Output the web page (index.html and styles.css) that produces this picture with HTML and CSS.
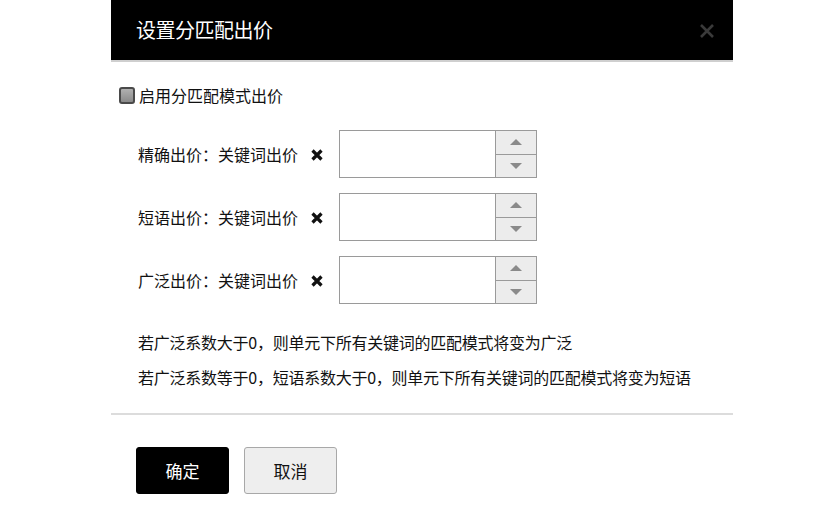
FILE: index.html
```html
<!DOCTYPE html>
<html lang="zh-CN">
<head>
<meta charset="utf-8">
<title>设置分匹配出价</title>
<link rel="stylesheet" href="styles.css">
</head>
<body>
<div class="dialog">
  <div class="dialog-header">
    <span class="dialog-title">设置分匹配出价</span>
    <span class="dialog-close" aria-label="关闭">
      <svg width="16" height="16" viewBox="0 0 16 16"><path d="M2 2 L14 14 M14 2 L2 14" stroke="#3a3a3a" stroke-width="2.6" fill="none"/></svg>
    </span>
  </div>
  <div class="dialog-body">
    <label class="enable-row"><span class="checkbox"></span>启用分匹配模式出价</label>
    <div class="rows">
      <div class="row">
        <span class="row-label">精确出价：关键词出价</span>
        <span class="times"><svg width="12" height="12" viewBox="0 0 12 12"><path d="M1.5 1.5 L10.5 10.5 M10.5 1.5 L1.5 10.5" stroke="#111" stroke-width="3.2" fill="none"/></svg></span>
        <div class="spin">
          <div class="spin-field"></div>
          <div class="spin-btns">
            <div class="spin-btn"><span class="tri-up"></span></div>
            <div class="spin-btn"><span class="tri-down"></span></div>
          </div>
        </div>
      </div>
      <div class="row">
        <span class="row-label">短语出价：关键词出价</span>
        <span class="times"><svg width="12" height="12" viewBox="0 0 12 12"><path d="M1.5 1.5 L10.5 10.5 M10.5 1.5 L1.5 10.5" stroke="#111" stroke-width="3.2" fill="none"/></svg></span>
        <div class="spin">
          <div class="spin-field"></div>
          <div class="spin-btns">
            <div class="spin-btn"><span class="tri-up"></span></div>
            <div class="spin-btn"><span class="tri-down"></span></div>
          </div>
        </div>
      </div>
      <div class="row">
        <span class="row-label">广泛出价：关键词出价</span>
        <span class="times"><svg width="12" height="12" viewBox="0 0 12 12"><path d="M1.5 1.5 L10.5 10.5 M10.5 1.5 L1.5 10.5" stroke="#111" stroke-width="3.2" fill="none"/></svg></span>
        <div class="spin">
          <div class="spin-field"></div>
          <div class="spin-btns">
            <div class="spin-btn"><span class="tri-up"></span></div>
            <div class="spin-btn"><span class="tri-down"></span></div>
          </div>
        </div>
      </div>
    </div>
    <div class="notes">
      <p>若广泛系数大于0，则单元下所有关键词的匹配模式将变为广泛</p>
      <p>若广泛系数等于0，短语系数大于0，则单元下所有关键词的匹配模式将变为短语</p>
    </div>
  </div>
  <div class="divider"></div>
  <div class="dialog-footer">
    <button class="btn btn-primary">确定</button>
    <button class="btn btn-default">取消</button>
  </div>
</div>
</body>
</html>
```

FILE: styles.css
```css
html, body {
  margin: 0;
  padding: 0;
  background: #fff;
}
body {
  font-family: "Noto Sans CJK SC", "Noto Sans", sans-serif;
  color: #111;
  font-size: 16px;
}
.dialog {
  width: 622px;
  margin-left: 111px;
  display: flex;
  flex-direction: column;
}
.dialog-header {
  height: 60px;
  background: #000;
  border-bottom: 2px solid #cfcfcf;
  display: flex;
  align-items: center;
  justify-content: space-between;
  padding: 0 18px 0 25px;
}
.dialog-title {
  color: #fff;
  font-size: 20px;
  line-height: 24px;
  letter-spacing: -0.5px;
}
.dialog-close {
  display: flex;
  margin-top: 2px;
}
.dialog-body {
  padding-left: 8px;
  display: flex;
  flex-direction: column;
}
.enable-row {
  margin-top: 23px;
  height: 20px;
  display: flex;
  align-items: center;
  line-height: 20px;
  font-size: 16px;
}
.checkbox {
  width: 12px;
  height: 13px;
  border: 2px solid #4a4a4a;
  border-radius: 3px;
  background: linear-gradient(#b0b0b0, #8a8a8a);
  margin-right: 4px;
}
.rows {
  margin-top: 25px;
  display: flex;
  flex-direction: column;
  gap: 15px;
}
.row {
  display: flex;
  align-items: center;
  height: 48px;
  padding-left: 19px;
}
.row-label {
  width: 173px;
  line-height: 20px;
  white-space: nowrap;
}
.times {
  display: flex;
  width: 28px;
  margin-top: 2px;
}
.spin {
  width: 198px;
  height: 48px;
  box-sizing: border-box;
  border: 1px solid #9a9a9a;
  display: flex;
  background: #fff;
}
.spin-field {
  flex: 1;
}
.spin-btns {
  width: 40px;
  border-left: 1px solid #9a9a9a;
  display: flex;
  flex-direction: column;
}
.spin-btn {
  flex: 1;
  background: #ececec;
  display: flex;
  align-items: center;
  justify-content: center;
}
.spin-btn + .spin-btn {
  border-top: 1px solid #9a9a9a;
}
.tri-up {
  width: 0;
  height: 0;
  border-left: 6px solid transparent;
  border-right: 6px solid transparent;
  border-bottom: 6px solid #8a8a8a;
}
.tri-down {
  width: 0;
  height: 0;
  border-left: 6px solid transparent;
  border-right: 6px solid transparent;
  border-top: 6px solid #8a8a8a;
}
.notes {
  margin-top: 21px;
  padding-left: 19px;
}
.notes p {
  margin: 0;
  line-height: 35px;
  white-space: nowrap;
  letter-spacing: -0.25px;
}
.divider {
  margin-top: 18px;
  height: 2px;
  background: #dcdcdc;
}
.dialog-footer {
  margin-top: 32px;
  padding-left: 25px;
  display: flex;
  gap: 15px;
}
.btn {
  width: 93px;
  height: 47px;
  font-family: "Noto Sans CJK SC", "Noto Sans", sans-serif;
  font-size: 17px;
  border-radius: 3px;
  cursor: pointer;
}
.btn-primary {
  background: #000;
  color: #fff;
  border: 1px solid #000;
}
.btn-default {
  background: #eeeeee;
  color: #111;
  border: 1px solid #a8a8a8;
}
```
